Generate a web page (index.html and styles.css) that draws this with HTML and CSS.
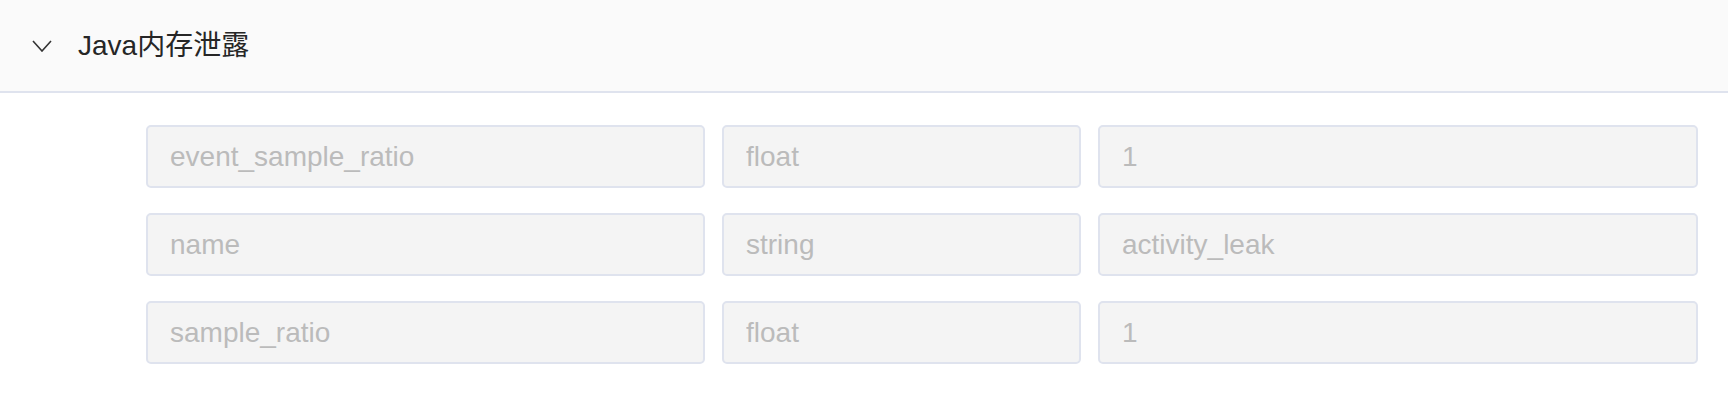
FILE: index.html
```html
<!DOCTYPE html>
<html lang="zh-CN">
  <head>
    <meta charset="UTF-8" />
    <meta name="viewport" content="width=device-width, initial-scale=1.0" />
    <title>Java内存泄露</title>
    <link rel="stylesheet" href="styles.css">
  </head>
  <body>
    <div class="panel">
      <div class="panel-header">
        <svg class="chevron" width="20" height="12" viewBox="0 0 20 12">
          <polyline points="1,1 10,11 19,1" fill="none" stroke="#333333" stroke-width="1.6" />
        </svg>
        <span class="panel-title">Java内存泄露</span>
      </div>

      <div class="panel-body">
        <div class="param-grid">
          <input class="field" type="text" value="event_sample_ratio" readonly />
          <input class="field" type="text" value="float" readonly />
          <input class="field" type="text" value="1" readonly />

          <input class="field" type="text" value="name" readonly />
          <input class="field" type="text" value="string" readonly />
          <input class="field" type="text" value="activity_leak" readonly />

          <input class="field" type="text" value="sample_ratio" readonly />
          <input class="field" type="text" value="float" readonly />
          <input class="field" type="text" value="1" readonly />
        </div>
      </div>
    </div>
  </body>
</html>
```

FILE: styles.css
```css
body {
  font-family: "Liberation Sans", "Noto Sans CJK SC", Arial, sans-serif;
  background-color: #ffffff;
  margin: 0;
}

.panel-header {
  display: flex;
  align-items: center;
  height: 93px;
  padding-left: 32px;
  background-color: #fafafa;
  border-bottom: 2px solid #dfe3ee;
  box-sizing: border-box;
}

.chevron {
  display: block;
  margin-right: 26px;
  margin-top: 1px;
}

.panel-title {
  font-size: 28px;
  line-height: 34px;
  color: #262626;
}

.panel-body {
  padding: 32px 30px 0 146px;
}

.param-grid {
  display: grid;
  grid-template-columns: 559px 359px 1fr;
  column-gap: 17px;
  row-gap: 25px;
}

.field {
  height: 63px;
  box-sizing: border-box;
  width: 100%;
  margin: 0;
  padding: 0 22px;
  border: 2px solid #dfe3ee;
  border-radius: 5px;
  background-color: #f4f4f4;
  color: #bbbbbb;
  font-family: "Liberation Sans", Arial, sans-serif;
  font-size: 28px;
  outline: none;
}
```
